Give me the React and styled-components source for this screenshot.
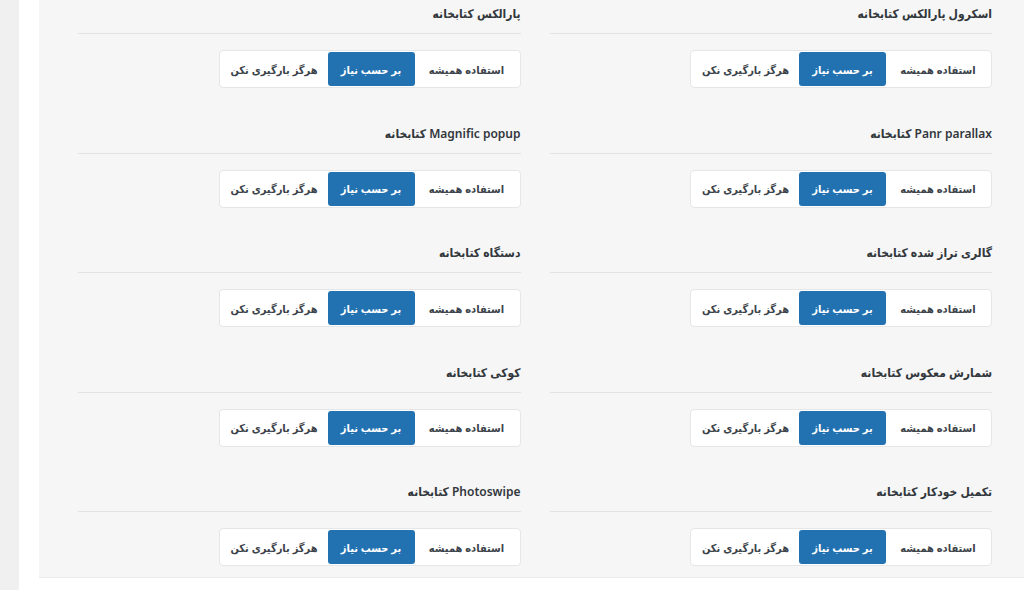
import React from 'react'
import styled, { createGlobalStyle } from 'styled-components'

const GlobalStyle = createGlobalStyle`
  html, body {
    margin: 0;
    padding: 0;
    background: #fff;
    font-family: "Noto Sans", "DejaVu Sans Condensed", "DejaVu Sans", sans-serif;
  }
`

const Page = styled.div`
  display: flex;
  height: 590px;
  overflow: hidden;
  background: #fff;
`

const Gutter = styled.div`
  width: 19px;
  flex-shrink: 0;
  background: #f0f0f0;
`

const Spacer = styled.div`
  width: 20px;
  flex-shrink: 0;
`

const Panel = styled.div`
  flex: 1;
  align-self: flex-start;
  background: #f6f6f6;
  border-bottom: 1px solid #ebebeb;
  padding: 0 32px 11px 39px;
  direction: rtl;
  display: grid;
  grid-template-columns: 1fr 1fr;
  grid-auto-rows: 88px;
  column-gap: 29px;
  row-gap: 31.5px;
`

const Field = styled.div`
  display: flex;
  flex-direction: column;
  align-items: flex-start;
`

const Title = styled.div`
  align-self: stretch;
  height: 34px;
  box-sizing: border-box;
  padding: 4px 0 0;
  line-height: 20px;
  font-size: 12px;
  font-weight: 600;
  font-stretch: condensed;
  color: #32373c;
  border-bottom: 1px solid #e2e2e2;
  margin-bottom: 16px;
`

const Segmented = styled.div`
  display: inline-flex;
  padding: 1px;
  background: #fff;
  border: 1px solid #e6e6e6;
  border-radius: 4px;
`

const Option = styled.button`
  width: ${({ w }) => w}px;
  height: 34px;
  padding: 0;
  border: 0;
  border-radius: 3px;
  font-family: inherit;
  font-size: 11px;
  font-weight: 700;
  font-stretch: condensed;
  cursor: pointer;
  background: ${({ active }) => (active ? '#2271b1' : 'transparent')};
  color: ${({ active }) => (active ? '#fff' : '#3c434a')};
`

const choices = [
  { label: 'استفاده همیشه', w: 104 },
  { label: 'بر حسب نیاز', w: 87 },
  { label: 'هرگز بارگیری نکن', w: 107 },
]

const libraries = [
  'اسکرول پارالکس کتابخانه',
  'پارالکس کتابخانه',
  'Panr parallax کتابخانه',
  'Magnific popup کتابخانه',
  'گالری تراز شده کتابخانه',
  'دستگاه کتابخانه',
  'شمارش معکوس کتابخانه',
  'کوکی کتابخانه',
  'تکمیل خودکار کتابخانه',
  'Photoswipe کتابخانه',
]

function LoadSetting({ title, value }) {
  return (
    <Field>
      <Title>{title}</Title>
      <Segmented>
        {choices.map((c, i) => (
          <Option key={c.label} w={c.w} active={i === value}>
            {c.label}
          </Option>
        ))}
      </Segmented>
    </Field>
  )
}

export default function App() {
  return (
    <>
      <GlobalStyle />
      <Page>
        <Gutter />
        <Spacer />
        <Panel>
          {libraries.map((t) => (
            <LoadSetting key={t} title={t} value={1} />
          ))}
        </Panel>
      </Page>
    </>
  )
}
